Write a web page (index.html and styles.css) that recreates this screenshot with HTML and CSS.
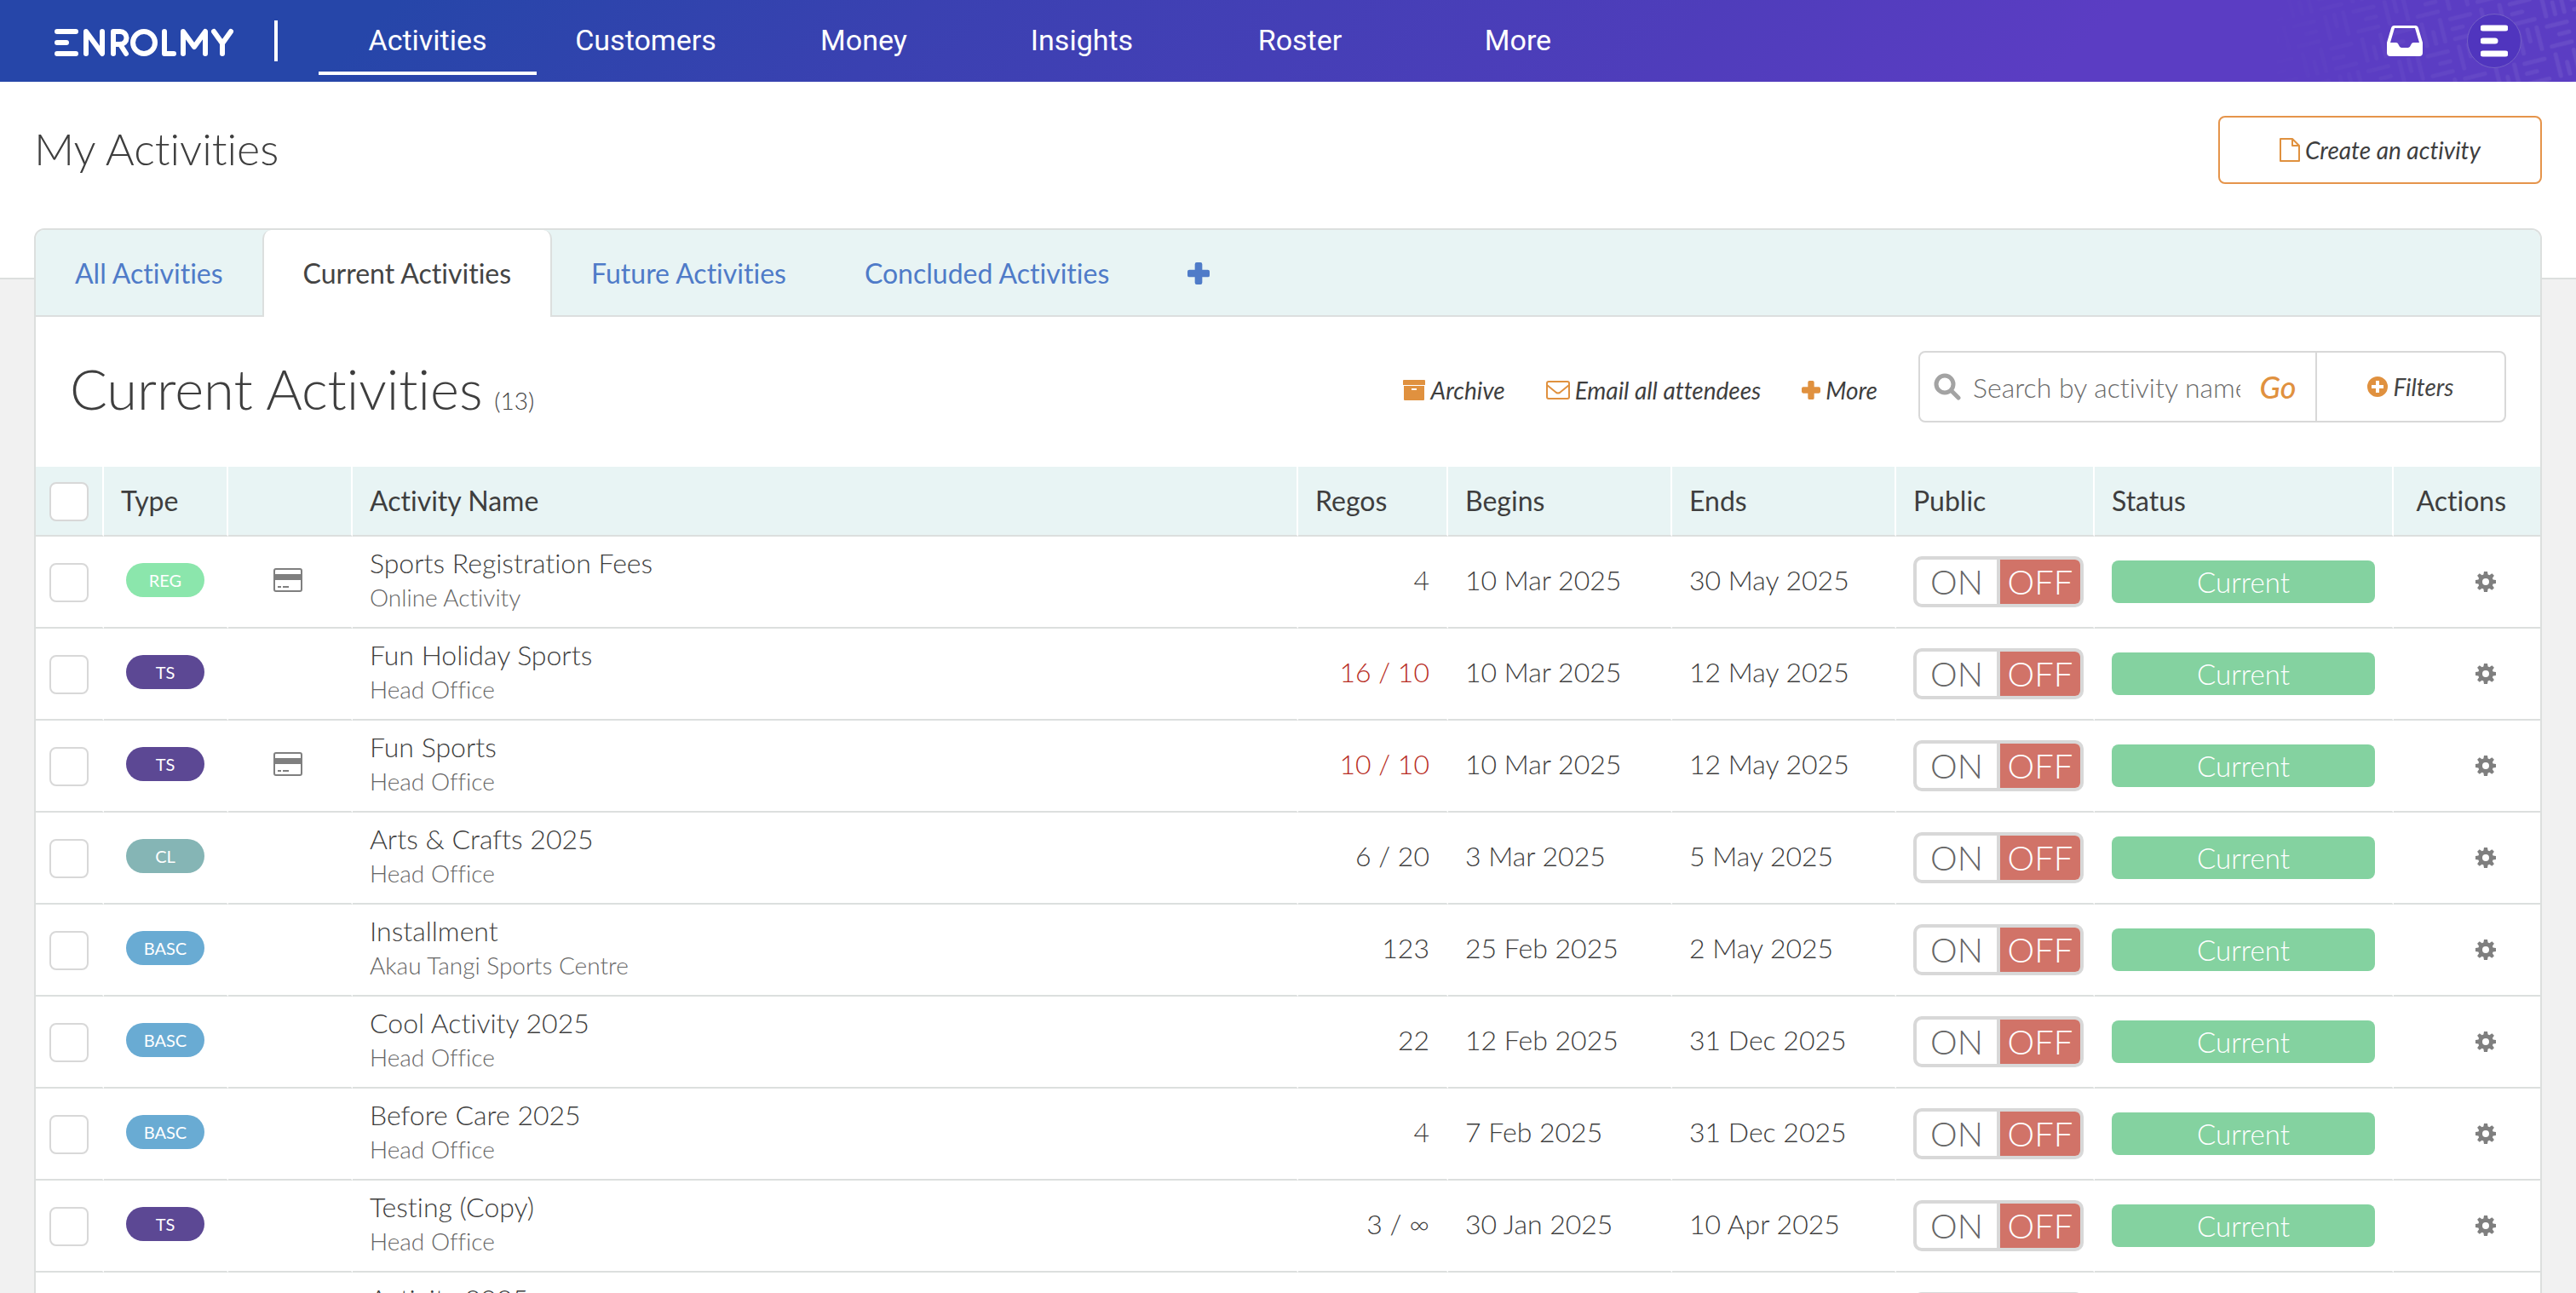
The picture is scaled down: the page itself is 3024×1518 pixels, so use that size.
FILE: index.html
```html
<!DOCTYPE html>
<html lang="en">
<head>
    <meta charset="UTF-8">
    <meta name="viewport" content="width=device-width, initial-scale=1.0">
    <title>My Activities</title>
    <link rel="stylesheet" href="styles.css">
</head>
<body>
    <!-- Icons shared by the header, toolbar and table -->
    <svg class="sprite" aria-hidden="true">
        <symbol id="icon-plus" viewBox="0 0 24 24">
            <path d="M10 0h4a2 2 0 0 1 2 2v6h6a2 2 0 0 1 2 2v4a2 2 0 0 1-2 2h-6v6a2 2 0 0 1-2 2h-4a2 2 0 0 1-2-2v-6H2a2 2 0 0 1-2-2v-4a2 2 0 0 1 2-2h6V2a2 2 0 0 1 2-2z"/>
        </symbol>
        <symbol id="icon-cog" viewBox="0 0 24 24">
            <path fill-rule="evenodd" d="M10 0h4l.6 3.400 1.800.800L19.300 2.200 21.900 4.800 19.900 7.700l.7 1.700L24 10v4l-3.400.600-.7 1.700 2 2.900-2.600 2.600-2.900-2-1.800.800L14 24h-4l-.6-3.400-1.800-.8-2.900 2-2.600-2.600 2-2.900-.7-1.700L0 14v-4l3.400-.6.7-1.700-2-2.900 2.600-2.600 2.900 2 1.800-.8zM12 8a4 4 0 1 0 0 8 4 4 0 0 0 0-8z"/>
        </symbol>
        <symbol id="icon-card" viewBox="0 0 34 28">
            <path fill-rule="evenodd" d="M3 0h28a3 3 0 0 1 3 3v22a3 3 0 0 1-3 3H3a3 3 0 0 1-3-3V3a3 3 0 0 1 3-3zm0 2a1 1 0 0 0-1 1v4h30V3a1 1 0 0 0-1-1zM2 14v11a1 1 0 0 0 1 1h28a1 1 0 0 0 1-1V14zm3 7h4v2H5zm6 0h7v2h-7z"/>
        </symbol>
    </svg>

    <header class="navbar">
        <svg class="pattern" width="380" height="96" aria-hidden="true">
            <defs>
                <pattern id="weave" width="72" height="72" patternUnits="userSpaceOnUse" patternTransform="rotate(-14)">
                    <path d="M4 6h24M4 18h12M4 30h24M42 4v26M53 16v14M64 4v26M6 40v26M17 40v14M28 40v26M40 42h24M52 54h12M40 66h24"/>
                </pattern>
                <linearGradient id="fade">
                    <stop offset="0" stop-color="#000"/>
                    <stop offset="1" stop-color="#fff"/>
                </linearGradient>
                <mask id="fade-mask"><rect width="380" height="96" fill="url(#fade)"/></mask>
            </defs>
            <rect width="380" height="96" fill="url(#weave)" mask="url(#fade-mask)"/>
        </svg>

        <a class="logo" href="#" aria-label="Enrolmy">
            <svg width="212" height="34" viewBox="0 0 212 34" aria-hidden="true">
                <path d="M3 4h22M3 17h11M3 30h22M37 30V4l19 26V4M69 30V4h8a7 7 0 0 1 0 15h-8M77 19l7 11M129 4v26h11M151 30V4l13 18L177 4v26M187 4l10 14L207 4M197 18v12"/>
                <ellipse cx="105" cy="17" rx="13" ry="13"/>
            </svg>
        </a>

        <nav class="nav-links">
            <a class="active" href="#">Activities</a>
            <a href="#">Customers</a>
            <a href="#">Money</a>
            <a href="#">Insights</a>
            <a href="#">Roster</a>
            <a href="#">More</a>
        </nav>

        <div class="nav-tools">
            <button class="icon-button" aria-label="Inbox">
                <svg width="42" height="36" viewBox="0 0 42 36"><path fill-rule="evenodd" d="M9 0h24a4 4 0 0 1 4 3l5 17v12a4 4 0 0 1-4 4H4a4 4 0 0 1-4-4V20L5 3a4 4 0 0 1 4-3zm0 3L4 20h7q2 0 3 3t3 3h8q2 0 3-3t3-3h7L33 3z"/></svg>
            </button>
            <button class="avatar" aria-label="Account">
                <svg width="32" height="38" viewBox="0 0 32 38"><path d="M3 4h26M3 19h14M3 34h26"/></svg>
            </button>
        </div>
    </header>

    <div class="page-header">
        <h1>My Activities</h1>
        <button class="create-button">
            <svg width="24" height="28" viewBox="0 0 24 28"><path fill="none" stroke="currentColor" stroke-width="2" stroke-linejoin="round" d="M1 1h14l8 8v18H1zM15 1v8h8"/></svg>
            Create an activity
        </button>
    </div>

    <main class="panel">
        <nav class="tabs">
            <a href="#">All Activities</a>
            <a class="active" href="#">Current Activities</a>
            <a href="#">Future Activities</a>
            <a href="#">Concluded Activities</a>
            <a class="add-tab" href="#" aria-label="Add tab"><svg width="26" height="26"><use href="#icon-plus"/></svg></a>
        </nav>

        <div class="toolbar">
            <h2>Current Activities <small>(13)</small></h2>
            <div class="toolbar-actions">
                <button>
                    <svg width="26" height="24" viewBox="0 0 26 24"><path fill-rule="evenodd" d="M1 0h24a1 1 0 0 1 1 1v5H0V1a1 1 0 0 1 1-1zm0 7h24v16a1 1 0 0 1-1 1H2a1 1 0 0 1-1-1zm9 3v2h6v-2z"/></svg>
                    Archive
                </button>
                <button>
                    <svg width="28" height="22" viewBox="0 0 28 22"><path fill="none" stroke="currentColor" stroke-width="2" d="M3 1h22a2 2 0 0 1 2 2v16a2 2 0 0 1-2 2H3a2 2 0 0 1-2-2V3a2 2 0 0 1 2-2zM1 5l11 9q2 1 4 0l11-9"/></svg>
                    Email all attendees
                </button>
                <button>
                    <svg width="22" height="22"><use href="#icon-plus"/></svg>
                    More
                </button>
            </div>
            <form class="search">
                <svg width="32" height="32" viewBox="0 0 32 32"><path fill="none" stroke="currentColor" stroke-width="5" stroke-linecap="round" d="M13 3a10 10 0 1 0 0 20a10 10 0 1 0 0-20M21 21l8 8"/></svg>
                <input type="text" placeholder="Search by activity name" aria-label="Search by activity name">
                <button class="go" type="button">Go</button>
                <button class="filters" type="button">
                    <svg width="24" height="24" viewBox="0 0 24 24"><path fill-rule="evenodd" d="M12 0a12 12 0 1 0 0 24 12 12 0 0 0 0-24zm-2 5h4v5h5v4h-5v5h-4v-5H5v-4h5z"/></svg>
                    Filters
                </button>
            </form>
        </div>

        <table>
            <thead>
                <tr>
                    <th class="col-check"><input type="checkbox" aria-label="Select all"></th>
                    <th class="col-type">Type</th>
                    <th class="col-card"></th>
                    <th>Activity Name</th>
                    <th class="col-regos">Regos</th>
                    <th class="col-date">Begins</th>
                    <th class="col-date">Ends</th>
                    <th class="col-public">Public</th>
                    <th class="col-status">Status</th>
                    <th class="col-actions">Actions</th>
                </tr>
            </thead>
            <tbody id="activities-list">
                <!-- Activities will be populated here -->
            </tbody>
        </table>
    </main>

    <script src="script.js"></script>
</body>
</html>
```
FILE: styles.css
```css
* {
    box-sizing: border-box;
}

body {
    font-family: Lato, sans-serif;
    font-weight: 300;
    font-size: 32px;
    line-height: 40px;
    font-variant-ligatures: none;
    color: #3e3e3e;
    background-color: #f1f1f1;
    margin: 0;
    height: 100vh;
    overflow: hidden;
}

a {
    text-decoration: none;
}

button {
    font: inherit;
    font-variant-ligatures: none;
    color: inherit;
    background: none;
    border: 0;
    padding: 0;
    cursor: pointer;
}

svg {
    fill: currentColor;
    flex: none;
}

.sprite {
    display: none;
}

/* Top navigation */
.navbar {
    position: relative;
    display: flex;
    align-items: center;
    height: 96px;
    padding: 0 64px;
    color: #fff;
    background: linear-gradient(135deg, #2646a9 15%, #3a41b1 35%, #4f3dbb 65%, #5b3dc3 80%);
}

.pattern {
    position: absolute;
    top: 0;
    right: 0;
}

.pattern path {
    fill: none;
    stroke: #fff;
    stroke-opacity: 0.08;
    stroke-width: 5;
    stroke-linecap: round;
}

.logo {
    display: flex;
    align-items: center;
    height: 48px;
    padding: 4px 46px 0 0;
    border-right: 4px solid #fff;
    color: #fff;
}

.logo svg {
    fill: none;
    stroke: currentColor;
    stroke-width: 6;
    stroke-linecap: round;
    stroke-linejoin: round;
}

.nav-links {
    display: flex;
    margin-left: 48px;
}

.nav-links a {
    width: 256px;
    height: 80px;
    line-height: 78px;
    text-align: center;
    font-family: Roboto, sans-serif;
    font-size: 34px;
    font-weight: 400;
    color: #fff;
}

.nav-links .active {
    border-bottom: 4px solid #fff;
}

.nav-tools {
    position: relative;
    display: flex;
    align-items: center;
    gap: 52px;
    margin-left: auto;
}

.icon-button {
    display: flex;
}

.avatar {
    display: flex;
    align-items: center;
    justify-content: center;
    width: 64px;
    height: 64px;
    border: 1px solid #7560c6;
    border-radius: 50%;
    background-color: #5035be;
}

.avatar svg {
    stroke: #fff;
    stroke-width: 7;
    stroke-linecap: round;
}

/* Page title */
.page-header {
    display: flex;
    align-items: flex-start;
    justify-content: space-between;
    height: 232px;
    padding: 40px;
    background-color: #fff;
    border-bottom: 2px solid #dcdfde;
}

h1 {
    margin: 6px 0 0;
    font-size: 52px;
    line-height: 64px;
    font-weight: 300;
}

.create-button {
    display: flex;
    align-items: center;
    justify-content: center;
    gap: 6px;
    width: 380px;
    height: 80px;
    border: 2px solid #e5944b;
    border-radius: 8px;
    font-size: 28px;
    font-style: italic;
    font-weight: 400;
}

.create-button svg,
.toolbar-actions svg,
.filters svg {
    color: #e0913f;
}

/* Panel with tabs */
.panel {
    margin: -60px 40px 0;
    position: relative;
    background-color: #fff;
    border: 2px solid #dcdfde;
    border-radius: 12px 12px 0 0;
}

.tabs {
    display: flex;
    height: 102px;
    background-color: #e8f4f4;
    border-bottom: 2px solid #dcdfde;
    border-radius: 10px 10px 0 0;
}

.tabs a {
    height: 102px;
    padding: 0 46px;
    line-height: 102px;
    font-weight: 400;
    color: #4f7bc8;
}

.tabs .active {
    color: #444;
    background-color: #fff;
    border: solid #dcdfde;
    border-width: 0 2px;
    border-radius: 10px 10px 0 0;
}

.tabs .add-tab {
    display: flex;
    align-items: center;
}

.toolbar {
    display: flex;
    align-items: flex-start;
    height: 176px;
    padding: 40px 40px 0;
}

h2 {
    margin: 4px 0 0;
    font-size: 65px;
    line-height: 80px;
    font-weight: 300;
}

h2 small {
    font-size: 28px;
    margin-left: -4px;
}

.toolbar-actions {
    display: flex;
    gap: 48px;
    margin: 26px 48px 0 auto;
}

.toolbar-actions button,
.filters {
    display: flex;
    align-items: center;
    gap: 6px;
    font-size: 28px;
    font-style: italic;
    font-weight: 400;
}

.search {
    display: flex;
    align-items: center;
    width: 690px;
    height: 84px;
    padding-left: 16px;
    border: 2px solid #d8d8d8;
    border-radius: 8px;
    color: #a3a3a3;
}

.search input {
    flex: 1;
    min-width: 0;
    height: 76px;
    margin-left: 14px;
    padding: 0;
    border: 0;
    outline: 0;
    background: none;
    font: inherit;
}

.search input::placeholder {
    color: #6c6c6c;
}

.go {
    width: 88px;
    font-size: 36px;
    font-style: italic;
    font-weight: 500;
    color: #e0913f;
}

.filters {
    justify-content: center;
    width: 222px;
    height: 80px;
    border-left: 2px solid #d8d8d8;
    color: #444;
}

/* Activities table */
table {
    width: 100%;
    table-layout: fixed;
    border-collapse: separate;
    border-spacing: 0;
}

th, td {
    padding: 0 20px;
    border-bottom: 2px solid #dcdfde;
    border-right: 2px solid #fff;
    text-align: left;
    white-space: nowrap;
}

th {
    height: 82px;
    font-weight: 400;
    background-color: #e8f4f4;
}

td {
    height: 108px;
    padding-bottom: 4px;
}

th:last-child,
td:last-child {
    border-right: 0;
}

.col-check {
    width: 80px;
}

.col-type,
.col-card {
    width: 146px;
}

.col-regos {
    width: 176px;
}

.col-date {
    width: 263px;
}

.col-public {
    width: 233px;
}

.col-status {
    width: 351px;
}

.col-actions {
    width: 172px;
    padding-right: 40px;
    text-align: right;
}

td.control {
    padding-bottom: 0;
}

input[type="checkbox"] {
    appearance: none;
    display: block;
    width: 46px;
    height: 46px;
    margin: 2px 0 0 -4px;
    border: 2px solid #d8d8d8;
    border-radius: 8px;
    background-color: #fff;
}

.badge {
    display: block;
    width: 92px;
    height: 40px;
    margin-left: 6px;
    border-radius: 20px;
    font-size: 20px;
    font-weight: 400;
    line-height: 40px;
    text-align: center;
    color: #fff;
}

.badge-reg {
    background-color: #8be6ac;
}

.badge-ts {
    background-color: #5c4894;
}

.badge-cl {
    background-color: #85b5b5;
}

.badge-basc {
    background-color: #69abd3;
}

td.card {
    padding-right: 24px;
}

.card svg {
    display: block;
    margin: 0 auto;
    color: #7f7f7f;
}

.activity-name {
    display: block;
    color: #3e3e3e;
}

.venue {
    display: block;
    font-size: 28px;
    color: #666;
}

.regos {
    text-align: right;
}

.full {
    color: #b82e24;
}

.toggle {
    display: flex;
    width: 200px;
    height: 60px;
    border: 4px solid #d8d8d8;
    border-radius: 10px;
    font-size: 40px;
    line-height: 52px;
    overflow: hidden;
}

.toggle span {
    flex: 1;
    text-align: center;
    color: #666;
}

.toggle .off {
    color: #fff;
    background-color: #d17368;
    border-left: 4px solid #d8d8d8;
}

.status {
    display: block;
    height: 50px;
    border-radius: 8px;
    font-size: 33px;
    line-height: 50px;
    text-align: center;
    color: #fff;
    background-color: #84d2a0;
}

td.actions {
    padding-right: 52px;
}

.actions button {
    display: block;
    margin-left: auto;
    color: #7f7f7f;
}

.actions svg {
    display: block;
}
```
FILE: script.js
```js
const activities = [
    { type: 'REG', card: true, name: 'Sports Registration Fees', venue: 'Online Activity', regos: '4', begins: '10 Mar 2025', ends: '30 May 2025' },
    { type: 'TS', name: 'Fun Holiday Sports', venue: 'Head Office', regos: '16 / 10', full: true, begins: '10 Mar 2025', ends: '12 May 2025' },
    { type: 'TS', card: true, name: 'Fun Sports', venue: 'Head Office', regos: '10 / 10', full: true, begins: '10 Mar 2025', ends: '12 May 2025' },
    { type: 'CL', name: 'Arts & Crafts 2025', venue: 'Head Office', regos: '6 / 20', begins: '3 Mar 2025', ends: '5 May 2025' },
    { type: 'BASC', name: 'Installment', venue: 'Akau Tangi Sports Centre', regos: '123', begins: '25 Feb 2025', ends: '2 May 2025' },
    { type: 'BASC', name: 'Cool Activity 2025', venue: 'Head Office', regos: '22', begins: '12 Feb 2025', ends: '31 Dec 2025' },
    { type: 'BASC', name: 'Before Care 2025', venue: 'Head Office', regos: '4', begins: '7 Feb 2025', ends: '31 Dec 2025' },
    { type: 'TS', name: 'Testing (Copy)', venue: 'Head Office', regos: '3 / ∞', begins: '30 Jan 2025', ends: '10 Apr 2025' },
    { type: 'TS', name: 'Activity 2025', venue: 'Head Office', regos: '5', begins: '20 Jan 2025', ends: '10 Apr 2025' }
];

const activitiesList = document.getElementById('activities-list');

activities.forEach(activity => {
    const name = activity.name.replace('&', '&amp;');
    const row = document.createElement('tr');
    row.innerHTML = `
        <td class="control"><input type="checkbox" aria-label="Select ${name}"></td>
        <td><span class="badge badge-${activity.type.toLowerCase()}">${activity.type}</span></td>
        <td class="card">${activity.card ? '<svg width="34" height="28"><use href="#icon-card"/></svg>' : ''}</td>
        <td>
            <a class="activity-name" href="#">${name}</a>
            <span class="venue">${activity.venue}</span>
        </td>
        <td class="regos${activity.full ? ' full' : ''}">${activity.regos}</td>
        <td>${activity.begins}</td>
        <td>${activity.ends}</td>
        <td class="control"><button class="toggle" aria-label="Public"><span>ON</span><span class="off">OFF</span></button></td>
        <td class="control"><span class="status">Current</span></td>
        <td class="control actions"><button aria-label="Actions"><svg width="24" height="24"><use href="#icon-cog"/></svg></button></td>
    `;
    activitiesList.appendChild(row);
});
```
